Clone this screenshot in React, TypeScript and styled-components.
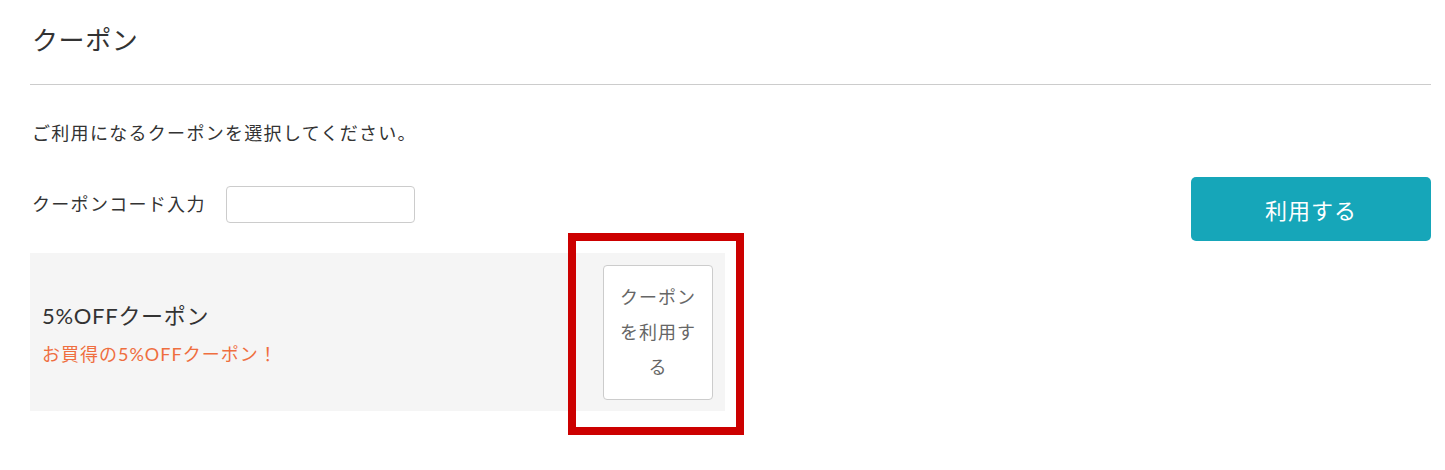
import React from "react";
import styled, { createGlobalStyle } from "styled-components";

const GlobalStyle = createGlobalStyle`
  html, body {
    margin: 0;
    padding: 0;
    background: #ffffff;
  }
  body {
    font-family: Lato, "Noto Sans CJK JP", sans-serif;
    color: #333333;
  }
  * { box-sizing: border-box; }
`;

const Page = styled.div`
  min-height: 470px;
  padding: 0 14px 0 30px;
`;

const Header = styled.div`
  padding: 21px 0 24px 2px;
  border-bottom: 1px solid #cccccc;
`;

const Title = styled.h2`
  margin: 0;
  font-size: 26px;
  font-weight: 400;
  line-height: 39px;
  letter-spacing: 0.6px;
  color: #333333;
`;

const Lead = styled.p`
  margin: 35px 0 0 2px;
  font-size: 18px;
  line-height: 27px;
  letter-spacing: 1.3px;
  color: #333333;
`;

const CodeRow = styled.div`
  margin-top: 30px;
  display: flex;
  justify-content: space-between;
  align-items: flex-start;
`;

const CodeField = styled.div`
  display: flex;
  align-items: center;
  gap: 20px;
  height: 55px;
  padding-left: 2px;
`;

const Label = styled.label`
  font-size: 18px;
  line-height: 27px;
  letter-spacing: 1.3px;
  color: #333333;
`;

const CodeInput = styled.input`
  width: 189px;
  height: 37px;
  border: 1px solid #cccccc;
  border-radius: 4px;
  background: #ffffff;
  outline: none;
  padding: 0 8px;
  font-size: 16px;
`;

const ApplyButton = styled.button`
  width: 240px;
  height: 64px;
  border: none;
  border-radius: 5px;
  background: #16a6b9;
  color: #ffffff;
  font-family: Lato, "Noto Sans CJK JP", sans-serif;
  font-size: 22px;
  letter-spacing: 1px;
  cursor: pointer;
`;

const CouponCard = styled.div`
  margin-top: 12px;
  width: 695px;
  height: 158px;
  background: #f5f5f5;
  display: flex;
  align-items: center;
  justify-content: space-between;
  padding: 0 12px;
`;

const CouponText = styled.div`
  display: flex;
  flex-direction: column;
  gap: 9px;
  padding-top: 3px;
`;

const CouponName = styled.div`
  font-size: 22px;
  line-height: 33px;
  letter-spacing: 0.7px;
  color: #333333;
`;

const CouponNote = styled.div`
  font-size: 18px;
  line-height: 27px;
  letter-spacing: 1px;
  color: #ef6e3f;
`;

const UseWrap = styled.div`
  position: relative;
  display: flex;
`;

const UseButton = styled.button`
  width: 110px;
  height: 135px;
  padding: 0 16px;
  background: #ffffff;
  border: 1px solid #cccccc;
  border-radius: 4px;
  color: #666666;
  font-family: Lato, "Noto Sans CJK JP", sans-serif;
  font-size: 18px;
  line-height: 35px;
  letter-spacing: 1px;
  text-align: center;
  cursor: pointer;
`;

const Highlight = styled.div`
  position: absolute;
  left: -35px;
  right: -31px;
  top: -32px;
  bottom: -35px;
  border: 8px solid #cc0000;
  pointer-events: none;
`;

export default function App() {
  return (
    <>
      <GlobalStyle />
      <Page>
        <Header>
          <Title>クーポン</Title>
        </Header>
        <Lead>ご利用になるクーポンを選択してください。</Lead>
        <CodeRow>
          <CodeField>
            <Label htmlFor="coupon-code">クーポンコード入力</Label>
            <CodeInput id="coupon-code" type="text" />
          </CodeField>
          <ApplyButton type="button">利用する</ApplyButton>
        </CodeRow>
        <CouponCard>
          <CouponText>
            <CouponName>5%OFFクーポン</CouponName>
            <CouponNote>お買得の5%OFFクーポン！</CouponNote>
          </CouponText>
          <UseWrap>
            <UseButton type="button">クーポンを利用する</UseButton>
            <Highlight />
          </UseWrap>
        </CouponCard>
      </Page>
    </>
  );
}
